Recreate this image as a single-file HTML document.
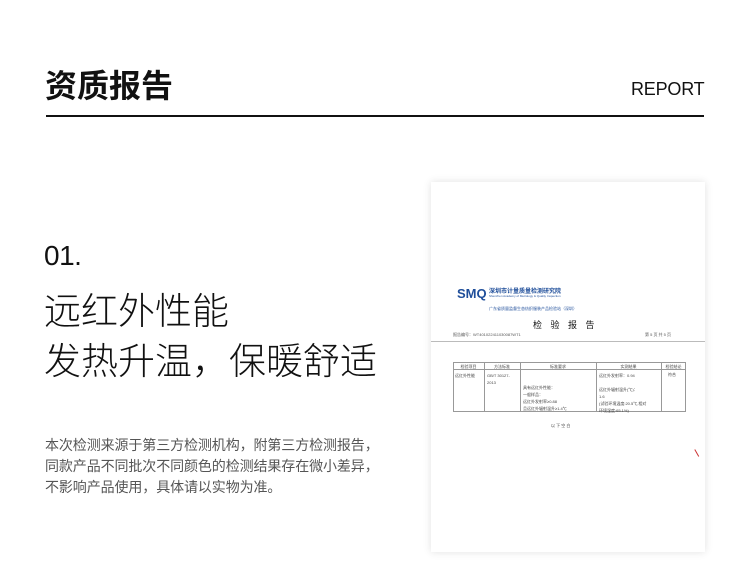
<!DOCTYPE html>
<html><head><meta charset="utf-8"><style>
*{margin:0;padding:0;box-sizing:border-box}
body{width:750px;height:587px;background:#fff;position:relative;overflow:hidden;font-family:"Liberation Sans","Noto Sans CJK SC",sans-serif;color:#111}
.a{position:absolute;white-space:nowrap}
.h{position:absolute;top:182px;font-size:4px;color:#444;text-align:center}
</style></head><body>
<div class="a" style="left:45px;top:61px;font-size:32px;font-weight:bold;letter-spacing:0px">资质报告</div>
<div class="a" style="left:631px;top:79px;font-size:18px;letter-spacing:-0.2px">REPORT</div>
<div class="a" style="left:46px;top:115px;width:658px;height:2px;background:#111"></div>
<div class="a" style="left:44px;top:240px;font-size:28px;font-weight:300;letter-spacing:-0.5px">01.</div>
<div class="a" style="left:44px;top:287px;font-size:37px;line-height:50px;font-weight:300">远红外性能<br>发热升温，保暖舒适</div>
<div class="a" style="left:45px;top:435px;font-size:14px;line-height:21px;color:#555;letter-spacing:-0.1px">本次检测来源于第三方检测机构，附第三方检测报告，<br>同款产品不同批次不同颜色的检测结果存在微小差异，<br>不影响产品使用，具体请以实物为准。</div>
<div class="a" style="left:431px;top:182px;width:274px;height:370px;background:#fff;box-shadow:0 0 8px rgba(0,0,0,.12)">
 <div class="a" style="left:26px;top:104px;font-size:13px;font-weight:bold;color:#1f4e9a">SMQ</div>
 <div class="a" style="left:58px;top:104px;font-size:6px;font-weight:bold;color:#1f4e9a">深圳市计量质量检测研究院</div>
 <div class="a" style="left:58px;top:112px;font-size:3px;color:#1f4e9a">Shenzhen Academy of Metrology &amp; Quality Inspection</div>
 <div class="a" style="left:58px;top:124px;font-size:4px;color:#1f4e9a">广东省质量监督生态纺织服装产品检验站（深圳）</div>
 <div class="a" style="left:102px;top:136px;font-size:9px;letter-spacing:3px">检 验 报 告</div>
 <div class="a" style="left:22px;top:150px;font-size:4px;color:#555">报告编号：WT401022411030087WT1</div>
 <div class="a" style="left:214px;top:150px;font-size:4px;color:#555">第 5 页 共 5 页</div>
 <div class="a" style="left:0;top:159px;width:274px;height:1px;background:#bbb"></div>
 <div class="a" style="left:22px;top:180px;width:233px;height:50px;border:1px solid #999"></div>
 <div class="a" style="left:22px;top:187px;width:233px;height:1px;background:#999"></div>
 <div class="a" style="left:53px;top:180px;width:1px;height:50px;background:#999"></div>
 <div class="a" style="left:89px;top:180px;width:1px;height:50px;background:#999"></div>
 <div class="a" style="left:165px;top:180px;width:1px;height:50px;background:#999"></div>
 <div class="a" style="left:230px;top:180px;width:1px;height:50px;background:#999"></div>
 <div class="h" style="left:22px;width:31px">检验项目</div>
 <div class="h" style="left:53px;width:36px">方法标准</div>
 <div class="h" style="left:89px;width:76px">标准要求</div>
 <div class="h" style="left:165px;width:65px">实测结果</div>
 <div class="h" style="left:230px;width:25px">检验结论</div>
 <div class="a" style="left:24px;top:190px;font-size:4px;line-height:7px;color:#444">远红外性能</div>
 <div class="a" style="left:56px;top:190px;font-size:4px;line-height:7px;color:#444">GB/T 30127-<br>2013</div>
 <div class="a" style="left:92px;top:202px;font-size:4px;line-height:7px;color:#444">具有远红外性能：<br>一般样品：<br>远红外发射率≥0.88<br>且远红外辐射温升≥1.4℃</div>
 <div class="a" style="left:168px;top:190px;font-size:4px;line-height:7px;color:#444">远红外发射率：0.94<br><br>远红外辐射温升(℃)：<br>1.6<br>(试验环境温度:20.5℃,相对<br>环境湿度:65.1%)</div>
 <div class="a" style="left:237px;top:190px;font-size:4px;color:#444">符合</div>
 <div class="a" style="left:120px;top:241px;font-size:4px;color:#444">以 下 空 白</div>
 <div class="a" style="left:265px;top:266px;width:5px;height:8px;border-left:1px solid #c33;transform:rotate(-30deg)"></div>
</div>
</body></html>
